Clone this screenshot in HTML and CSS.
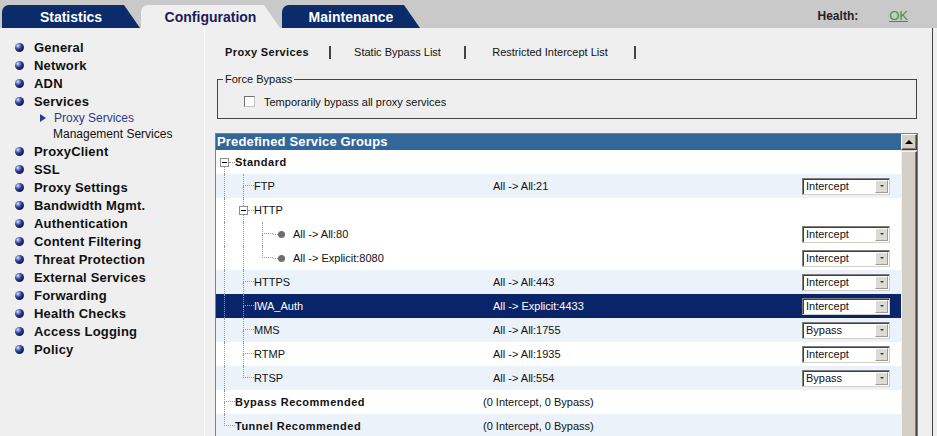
FILE: index.html
```html
<!DOCTYPE html>
<html>
<head>
<meta charset="utf-8">
<title>Configuration - Proxy Services</title>
<link rel="stylesheet" href="styles.css">
</head>
<body>
<div class="topbar">
  <div class="tabs">
    <div class="tab dark t1">Statistics</div>
    <div class="tab light t2">Configuration</div>
    <div class="tab dark t3">Maintenance</div>
  </div>
  <div class="health"><span class="hl">Health:</span><a class="ok">OK</a></div>
</div>
<div class="page">
  <nav class="nav">
    <ul>
      <li class="item"><span class="ball"></span>General</li>
      <li class="item"><span class="ball"></span>Network</li>
      <li class="item"><span class="ball"></span>ADN</li>
      <li class="item"><span class="ball"></span>Services</li>
      <li class="sub active"><span class="tri"></span>Proxy Services</li>
      <li class="sub plain">Management Services</li>
      <li class="item"><span class="ball"></span>ProxyClient</li>
      <li class="item"><span class="ball"></span>SSL</li>
      <li class="item"><span class="ball"></span>Proxy Settings</li>
      <li class="item"><span class="ball"></span>Bandwidth Mgmt.</li>
      <li class="item"><span class="ball"></span>Authentication</li>
      <li class="item"><span class="ball"></span>Content Filtering</li>
      <li class="item"><span class="ball"></span>Threat Protection</li>
      <li class="item"><span class="ball"></span>External Services</li>
      <li class="item"><span class="ball"></span>Forwarding</li>
      <li class="item"><span class="ball"></span>Health Checks</li>
      <li class="item"><span class="ball"></span>Access Logging</li>
      <li class="item"><span class="ball"></span>Policy</li>
    </ul>
  </nav>
  <main class="main">
    <div class="subtabs">
      <div class="st st1 on">Proxy Services</div><span class="sep"></span>
      <div class="st st2">Static Bypass List</div><span class="sep"></span>
      <div class="st st3">Restricted Intercept List</div><span class="sep"></span>
    </div>
    <fieldset class="fb">
      <legend>Force Bypass</legend>
      <label class="chk"><span class="cbox"></span>Temporarily bypass all proxy services</label>
    </fieldset>
    <div class="grid">
      <div class="gmain">
        <div class="ghead">Predefined Service Groups</div>

        <div class="row">
          <div class="name"><span class="c bx"><i class="ln none"></i><i class="m"><b class="b"></b><b class="d"></b></i><i class="ln"></i></span><span class="nm bold">Standard</span></div>
          <div class="val"></div><div></div><div></div>
        </div>

        <div class="row alt">
          <div class="name"><span class="c pipe"></span><span class="c tee"></span><span class="nm">FTP</span></div>
          <div class="val">All -&gt; All:21</div>
          <div class="sel"><span>Intercept</span><span class="arr"></span></div><div></div>
        </div>

        <div class="row">
          <div class="name"><span class="c pipe"></span><span class="c bx"><i class="ln"></i><i class="m"><b class="b"></b><b class="d"></b></i><i class="ln"></i></span><span class="nm">HTTP</span></div>
          <div class="val"></div><div></div><div></div>
        </div>

        <div class="row">
          <div class="name"><span class="c pipe"></span><span class="c pipe"></span><span class="c tee"></span><span class="dot"></span><span class="nm">All -&gt; All:80</span></div>
          <div class="val"></div>
          <div class="sel"><span>Intercept</span><span class="arr"></span></div><div></div>
        </div>

        <div class="row">
          <div class="name"><span class="c pipe"></span><span class="c pipe"></span><span class="c elbow"></span><span class="dot"></span><span class="nm">All -&gt; Explicit:8080</span></div>
          <div class="val"></div>
          <div class="sel"><span>Intercept</span><span class="arr"></span></div><div></div>
        </div>

        <div class="row alt">
          <div class="name"><span class="c pipe"></span><span class="c tee"></span><span class="nm">HTTPS</span></div>
          <div class="val">All -&gt; All:443</div>
          <div class="sel"><span>Intercept</span><span class="arr"></span></div><div></div>
        </div>

        <div class="row picked">
          <div class="name"><span class="c pipe"></span><span class="c tee"></span><span class="nm">IWA_Auth</span></div>
          <div class="val">All -&gt; Explicit:4433</div>
          <div class="sel"><span>Intercept</span><span class="arr"></span></div><div></div>
        </div>

        <div class="row alt">
          <div class="name"><span class="c pipe"></span><span class="c tee"></span><span class="nm">MMS</span></div>
          <div class="val">All -&gt; All:1755</div>
          <div class="sel"><span>Bypass</span><span class="arr"></span></div><div></div>
        </div>

        <div class="row">
          <div class="name"><span class="c pipe"></span><span class="c tee"></span><span class="nm">RTMP</span></div>
          <div class="val">All -&gt; All:1935</div>
          <div class="sel"><span>Intercept</span><span class="arr"></span></div><div></div>
        </div>

        <div class="row alt">
          <div class="name"><span class="c pipe"></span><span class="c elbow"></span><span class="nm">RTSP</span></div>
          <div class="val">All -&gt; All:554</div>
          <div class="sel"><span>Bypass</span><span class="arr"></span></div><div></div>
        </div>

        <div class="row">
          <div class="name"><span class="c tee"></span><span class="nm bold">Bypass Recommended</span></div>
          <div class="val shift">(0 Intercept, 0 Bypass)</div><div></div><div></div>
        </div>

        <div class="row alt">
          <div class="name"><span class="c elbow"></span><span class="nm bold">Tunnel Recommended</span></div>
          <div class="val shift">(0 Intercept, 0 Bypass)</div><div></div><div></div>
        </div>
      </div>
      <div class="vscroll">
        <div class="sbtn"></div>
        <div class="thumb"></div>
      </div>
    </div>
  </main>
</div>
</body>
</html>
```

FILE: styles.css
```css
html, body {
  margin: 0;
  padding: 0;
  height: 100%;
  overflow: hidden;
}
body {
  background: #efefef;
  font-family: "Liberation Sans", Arial, sans-serif;
  color: #000;
}

/* ---------- top bar ---------- */
.topbar {
  height: 28px;
  background: #c9c9c9;
  display: flex;
  align-items: flex-end;
  justify-content: space-between;
}
.tabs {
  display: flex;
  padding-left: 2px;
  height: 23px;
}
.tab {
  height: 23px;
  display: flex;
  align-items: center;
  justify-content: center;
  font-weight: bold;
  font-size: 14px;
  border-top-left-radius: 7px;
  clip-path: polygon(0 0, calc(100% - 16px) 0, 100% 100%, 0 100%);
}
.t1 { width: 138px; }
.t2 { width: 139px; margin-left: 1px; }
.t3 { width: 138px; margin-left: 2px; }
.dark { background: #0b2b6b; color: #fff; }
.light { background: #efefef; color: #1b1b5b; }

.health {
  height: 28px;
  box-sizing: border-box;
  padding: 3px 29px 0 0;
  display: flex;
  align-items: center;
}
.hl {
  font-weight: bold;
  font-size: 12px;
  color: #222;
}
.ok {
  margin-left: 31px;
  font-size: 13px;
  color: #3a953a;
  text-decoration: underline;
}

/* ---------- page ---------- */
.page {
  display: flex;
  height: calc(100% - 28px);
}
.nav {
  width: 204px;
  flex: none;
  border-right: 1px solid #fafafa;
}
.nav ul {
  list-style: none;
  margin: 0;
  padding: 10px 0 0 15px;
}
.item {
  height: 18px;
  display: flex;
  align-items: center;
  font-weight: bold;
  font-size: 13px;
  letter-spacing: 0.2px;
  color: #111;
}
.ball {
  width: 9px;
  height: 9px;
  border-radius: 50%;
  margin-right: 10px;
  flex: none;
  background: radial-gradient(circle at 33% 30%, #f2f5ff 0, #8a9ad6 16%, #27348a 45%, #0e1650 75%, #060a30 100%);
}
.sub {
  height: 16px;
  display: flex;
  align-items: center;
  font-size: 12px;
}
.sub.plain { padding-left: 38px; color: #111; }
.sub.active { padding-left: 25px; color: #2a3c8c; }
.tri {
  width: 0;
  height: 0;
  border-left: 6px solid #2a3c8c;
  border-top: 4px solid transparent;
  border-bottom: 4px solid transparent;
  margin-right: 8px;
}

.main {
  flex: 1;
  margin-right: 4px;
  border-right: 1px solid #444;
  display: flex;
  flex-direction: column;
  font-size: 11px;
}

/* ---------- sub tabs ---------- */
.subtabs {
  margin-top: 14px;
  height: 20px;
  display: flex;
  align-items: center;
}
.st {
  height: 20px;
  display: flex;
  align-items: center;
  justify-content: center;
  font-size: 11px;
  color: #111;
}
.st.on { font-weight: bold; letter-spacing: 0.35px; }
.st1 { width: 124px; }
.st2 { width: 133px; }
.st3 { width: 168px; }
.sep {
  width: 2px;
  height: 13px;
  background: #444;
}

/* ---------- force bypass ---------- */
.fb {
  margin: 11px 15px 0 12px;
  padding: 0 0 10px 0;
  border: 1px solid #444;
  min-width: 0;
}
.fb legend {
  margin-left: 5px;
  padding: 0 2px;
  font-size: 11px;
  line-height: 13px;
  color: #111;
}
.chk {
  display: flex;
  align-items: center;
  height: 13px;
  margin: 9px 0 0 26px;
  font-size: 11px;
  color: #111;
}
.cbox {
  width: 11px;
  height: 11px;
  box-sizing: border-box;
  border: 1px solid;
  border-color: #6f6f6f #c4c4c4 #c4c4c4 #6f6f6f;
  background: #fff;
  margin-right: 9px;
}

/* ---------- services grid ---------- */
.grid {
  margin: 14px 14px 0 10px;
  border: 1px solid #7f7f7f;
  background: #fff;
  display: flex;
}
.gmain { flex: 1; min-width: 0; }
.ghead {
  height: 16px;
  line-height: 16px;
  background: #336699;
  color: #fff;
  font-weight: bold;
  font-size: 13px;
  padding-left: 1px;
  letter-spacing: 0.15px;
}
.row {
  height: 24px;
  display: grid;
  grid-template-columns: 277px 309px 88px 1fr;
  align-items: center;
  background: #fff;
  color: #111;
}
.row.alt { background: #ecf2fa; }
.row.picked { background: #0a246a; color: #fff; }
.name {
  height: 24px;
  display: flex;
  align-items: stretch;
}
.nm { align-self: center; white-space: nowrap; }
.bold { font-weight: bold; letter-spacing: 0.5px; }
.val { white-space: nowrap; }
.val.shift { margin-left: -10px; }

/* tree guides */
.c {
  width: 19px;
  flex: none;
  display: flex;
  flex-direction: column;
}
.pipe::before {
  content: "";
  flex: 1;
  margin-left: 8px;
  border-left: 1px dotted #9a9a9a;
}
.tee::before, .elbow::before {
  content: "";
  height: 11px;
  margin-left: 8px;
  border-left: 1px dotted #9a9a9a;
  border-bottom: 1px dotted #9a9a9a;
}
.tee::after {
  content: "";
  flex: 1;
  margin-left: 8px;
  border-left: 1px dotted #9a9a9a;
}
.ln {
  flex: 1;
  margin-left: 8px;
  border-left: 1px dotted #9a9a9a;
}
.ln.none { border-left: 0; }
.m {
  display: flex;
  align-items: center;
  height: 9px;
  margin-left: 4px;
}
.b {
  width: 9px;
  height: 9px;
  box-sizing: border-box;
  border: 1px solid #8c8c8c;
  background: #fff;
  display: flex;
  align-items: center;
  justify-content: center;
  flex: none;
}
.b::before {
  content: "";
  width: 5px;
  height: 1px;
  background: #000;
}
.d {
  flex: 1;
  height: 0;
  margin-left: 0;
  border-top: 1px dotted #9a9a9a;
}
.dot {
  width: 20px;
  flex: none;
  display: flex;
  align-items: center;
}
.dot::before {
  content: "";
  width: 5px;
  border-top: 1px dotted #9a9a9a;
}
.dot::after {
  content: "";
  width: 7px;
  height: 7px;
  border-radius: 50%;
  background: #6e6e6e;
}

/* select box */
.sel {
  width: 88px;
  height: 17px;
  box-sizing: border-box;
  border: 1px solid;
  border-color: #808080 #d4d0c8 #d4d0c8 #808080;
  box-shadow: inset 1px 1px 0 #404040;
  background: #fff;
  color: #111;
  display: flex;
  align-items: center;
  justify-content: space-between;
  padding-left: 3px;
  font-size: 11px;
}
.arr {
  width: 13px;
  height: 13px;
  margin-right: 1px;
  box-sizing: border-box;
  border: 1px solid;
  border-color: #fff #9a9a9a #9a9a9a #fff;
  background: #dcdad5;
  display: flex;
  align-items: center;
  justify-content: center;
}
.arr::before {
  content: "";
  border-left: 2px solid transparent;
  border-right: 2px solid transparent;
  border-top: 2px solid #333;
}

/* scrollbar */
.vscroll {
  width: 16px;
  flex: none;
  background: #d4d0c8;
  display: flex;
  flex-direction: column;
}
.sbtn {
  height: 16px;
  box-sizing: border-box;
  border: 1px solid;
  border-color: #fff #404040 #404040 #fff;
  box-shadow: inset -1px -1px 0 #808080;
  background: #d4d0c8;
  display: flex;
  align-items: center;
  justify-content: center;
}
.sbtn::before {
  content: "";
  border-left: 4px solid transparent;
  border-right: 4px solid transparent;
  border-bottom: 4px solid #000;
}
.thumb {
  flex: 1;
  margin-top: 1px;
  box-sizing: border-box;
  border: 1px solid;
  border-color: #f4f3ef #404040 #404040 #f4f3ef;
  box-shadow: inset -1px -1px 0 #808080;
  background: #d4d0c8;
}
```
